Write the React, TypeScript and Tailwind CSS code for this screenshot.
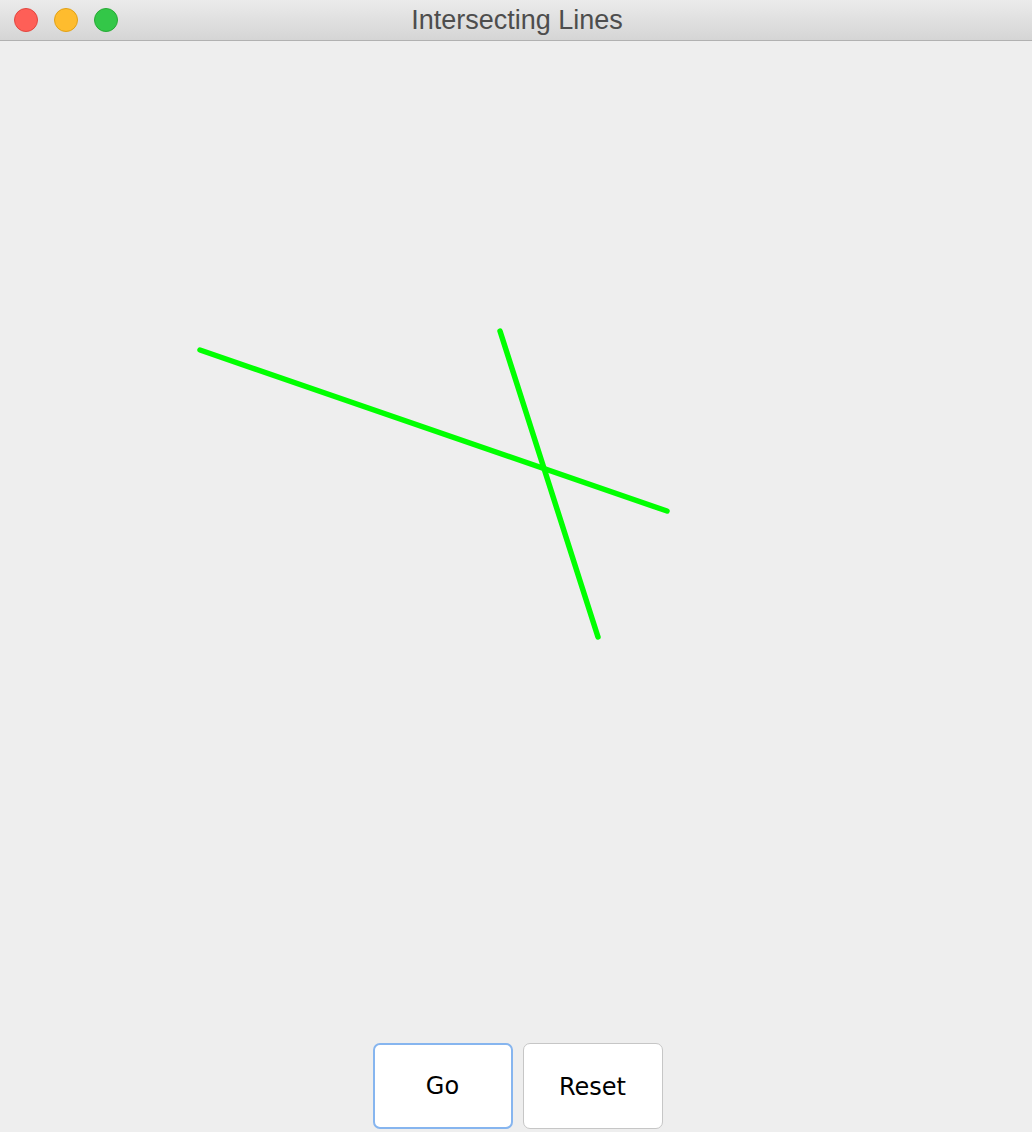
import React from 'react';

const TrafficLight: React.FC<{ fill: string; border: string }> = ({ fill, border }) => (
  <div className={`w-[24px] h-[24px] rounded-full border ${fill} ${border}`} />
);

const WindowButton: React.FC<{ label: string; focused?: boolean }> = ({ label, focused }) => (
  <button
    className={`w-[140px] h-[86px] rounded-[7px] bg-white text-black text-[24px] ${
      focused ? 'border-2 border-[#86b5ef]' : 'border border-[#c6c6c6] pt-[2px]'
    }`}
    style={{ fontFamily: '"DejaVu Sans", sans-serif' }}
  >
    {label}
  </button>
);

export default function App() {
  return (
    <div className="w-[1032px] h-[1132px] flex flex-col bg-[#eeeeee] overflow-hidden">
      <div className="h-[41px] shrink-0 flex items-center relative bg-gradient-to-b from-[#ebebeb] to-[#d5d5d5] border-b border-[#b1b1b1]">
        <div className="flex items-center gap-[16px] pl-[14px]">
          <TrafficLight fill="bg-[#fe5f57]" border="border-[#e2463f]" />
          <TrafficLight fill="bg-[#febc2e]" border="border-[#e1a116]" />
          <TrafficLight fill="bg-[#33c748]" border="border-[#27aa35]" />
        </div>
        <div
          className="absolute inset-0 flex items-center justify-center text-[27px] text-[#4d4d4d] pl-[2px]"
          style={{ fontFamily: '"Liberation Sans", Arial, sans-serif' }}
        >
          Intersecting Lines
        </div>
      </div>

      <div className="flex-1 relative">
        <svg className="absolute inset-0 w-full h-full" viewBox="0 41 1032 994" preserveAspectRatio="xMinYMin meet">
          <g stroke="#00ff00" strokeWidth="5.5" strokeLinecap="round">
            <line x1="200" y1="350" x2="667" y2="511" />
            <line x1="500" y1="331" x2="598" y2="637" />
          </g>
        </svg>
      </div>

      <div className="shrink-0 flex justify-center gap-[10px] pb-[3px] pl-[3px]">
        <WindowButton label="Go" focused />
        <WindowButton label="Reset" />
      </div>
    </div>
  );
}
